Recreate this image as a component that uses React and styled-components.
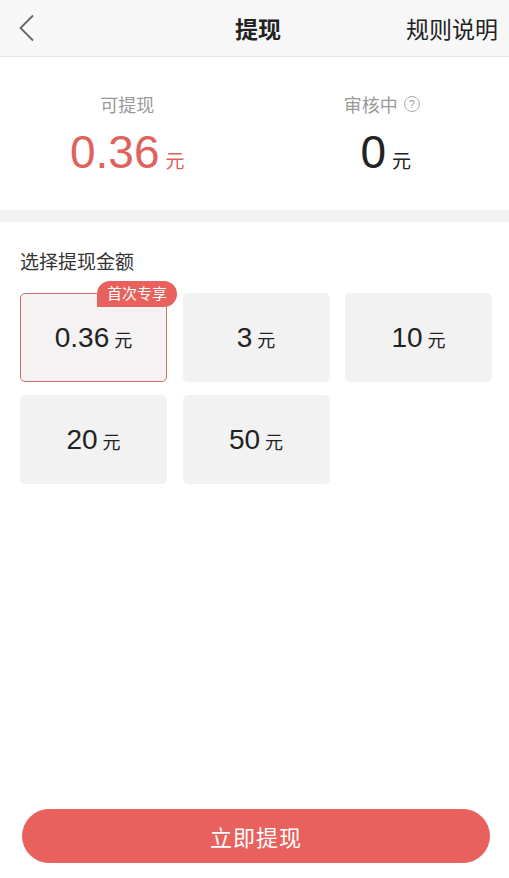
import React from 'react';
import styled, { createGlobalStyle } from 'styled-components';

const RED = '#e8615d';
const RED_TEXT = '#e0625d';
const GRAY_BG = '#f2f2f2';
const FONT = '"Liberation Sans", "Noto Sans CJK SC", sans-serif';

const GlobalStyle = createGlobalStyle`
  html, body {
    margin: 0;
    padding: 0;
    background: #fff;
  }
  body {
    font-family: ${FONT};
    color: #222;
  }
`;

const Page = styled.div`
  min-height: 100vh;
  display: flex;
  flex-direction: column;
  box-sizing: border-box;
`;

const Header = styled.header`
  height: 56px;
  display: grid;
  grid-template-columns: 1fr auto 1fr;
  align-items: center;
  background: #f7f7f7;
  border-bottom: 1px solid #e4e4e4;
  padding: 0 11px 0 18px;
`;

const BackButton = styled.button`
  justify-self: start;
  border: 0;
  background: none;
  padding: 0;
  display: flex;
  cursor: pointer;
`;

const Title = styled.h1`
  margin: 0;
  font-size: 23px;
  font-weight: 700;
  color: #222;
`;

const HeaderLink = styled.a`
  justify-self: end;
  font-size: 23px;
  color: #222;
  text-decoration: none;
`;

const Summary = styled.section`
  display: grid;
  grid-template-columns: 1fr 1fr;
  padding: 35px 0 20px;
`;

const Stat = styled.div`
  display: flex;
  flex-direction: column;
  align-items: center;
`;

const StatLabel = styled.div`
  display: flex;
  align-items: center;
  gap: 6px;
  height: 24px;
  font-size: 18px;
  color: #999;
  margin-bottom: 8px;
`;

const HelpIcon = styled.span`
  width: 14px;
  height: 14px;
  border: 1px solid #aaa;
  border-radius: 50%;
  font-size: 11px;
  line-height: 14px;
  text-align: center;
  color: #999;
`;

const StatValue = styled.div`
  line-height: 56px;
  font-size: 46px;
  color: ${(p) => (p.$accent ? RED_TEXT : '#222')};
  ${(p) => !p.$accent && 'margin-left: 8px;'}
`;

const Unit = styled.span`
  font-size: ${(p) => p.$size || 19}px;
  margin-left: ${(p) => p.$gap || 6}px;
`;

const Divider = styled.div`
  height: 12px;
  background: ${GRAY_BG};
`;

const SectionTitle = styled.h2`
  margin: 28px 0 17px 20px;
  font-size: 19px;
  line-height: 26px;
  font-weight: 400;
  color: #333;
`;

const AmountGrid = styled.div`
  display: grid;
  grid-template-columns: repeat(3, 1fr);
  grid-auto-rows: 89px;
  column-gap: 15.5px;
  row-gap: 13px;
  padding: 0 17px 0 20px;
`;

const AmountCard = styled.button`
  position: relative;
  display: flex;
  align-items: center;
  justify-content: center;
  border-radius: 5px;
  border: 1.5px solid ${(p) => (p.$selected ? '#cf6e66' : GRAY_BG)};
  background: ${(p) => (p.$selected ? '#f4f2f2' : GRAY_BG)};
  font-family: ${FONT};
  color: #222;
  padding: 0;
  cursor: pointer;
`;

const CardValue = styled.span`
  font-size: 28px;
  line-height: 1;
`;

const Badge = styled.span`
  position: absolute;
  top: -13px;
  right: -11px;
  height: 26px;
  line-height: 26px;
  padding: 0 10px;
  background: ${RED};
  color: #fff;
  font-size: 15px;
  border-radius: 13px 13px 13px 0;
`;

const Footer = styled.div`
  margin-top: auto;
  padding: 0 19px 15px 22px;
`;

const SubmitButton = styled.button`
  width: 100%;
  height: 54px;
  border: 0;
  border-radius: 27px;
  background: ${RED};
  color: #fff;
  font-family: ${FONT};
  font-size: 22px;
  letter-spacing: 1px;
  cursor: pointer;
`;

const amounts = [
  { value: '0.36', selected: true, badge: '首次专享' },
  { value: '3' },
  { value: '10' },
  { value: '20' },
  { value: '50' },
];

export default function App() {
  return (
    <Page>
      <GlobalStyle />
      <Header>
        <BackButton aria-label="返回">
          <svg width="17" height="28" viewBox="0 0 17 28" fill="none">
            <polyline points="15,1.5 2.5,14 15,26.5" stroke="#666" strokeWidth="1.8" />
          </svg>
        </BackButton>
        <Title>提现</Title>
        <HeaderLink>规则说明</HeaderLink>
      </Header>

      <Summary>
        <Stat>
          <StatLabel>可提现</StatLabel>
          <StatValue $accent>
            0.36<Unit>元</Unit>
          </StatValue>
        </Stat>
        <Stat>
          <StatLabel>
            审核中<HelpIcon>?</HelpIcon>
          </StatLabel>
          <StatValue>
            0<Unit>元</Unit>
          </StatValue>
        </Stat>
      </Summary>

      <Divider />

      <SectionTitle>选择提现金额</SectionTitle>
      <AmountGrid>
        {amounts.map((a) => (
          <AmountCard key={a.value} $selected={a.selected}>
            {a.badge && <Badge>{a.badge}</Badge>}
            <CardValue>
              {a.value}
              <Unit $size={18} $gap={5}>元</Unit>
            </CardValue>
          </AmountCard>
        ))}
      </AmountGrid>

      <Footer>
        <SubmitButton>立即提现</SubmitButton>
      </Footer>
    </Page>
  );
}
